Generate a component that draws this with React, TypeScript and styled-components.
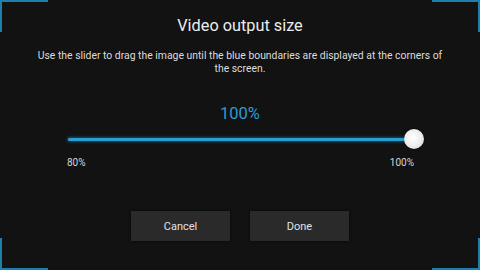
import React from "react";
import styled, { createGlobalStyle } from "styled-components";

const Global = createGlobalStyle`
  html, body { margin: 0; padding: 0; background: #121212; }
  body { font-family: Roboto, "Noto Sans", "Liberation Sans", sans-serif; }
`;

const Screen = styled.div`
  position: relative;
  width: 480px;
  height: 270px;
  overflow: hidden;
  background: #121212;
  display: flex;
  flex-direction: column;
  align-items: center;
  color: #e6e6e6;
`;

const Corner = styled.span<{ $v: "top" | "bottom"; $h: "left" | "right" }>`
  position: absolute;
  width: 48px;
  height: 32px;
  ${(p) => p.$v}: 0;
  ${(p) => p.$h}: 0;
  border-${(p) => p.$v}: 2px solid #1c80aa;
  border-${(p) => p.$h}: 2px solid #1c80aa;
  box-sizing: border-box;
`;

const Title = styled.h1`
  margin: 14px 0 0;
  font-size: 16.3px;
  line-height: 24px;
  font-weight: 400;
  color: #ececec;
`;

const Description = styled.p`
  margin: 11px 0 0;
  width: 420px;
  font-size: 10.4px;
  line-height: 13px;
  text-align: center;
  color: #dcdcdc;
`;

const Percent = styled.div`
  margin-top: 29px;
  font-size: 16.5px;
  line-height: 20px;
  color: #2b9bd2;
`;

const SliderBlock = styled.div`
  margin: 6px 0 0 2px;
  width: 346px;
  display: flex;
  flex-direction: column;
`;

const TrackArea = styled.div`
  position: relative;
  height: 18px;
  display: flex;
  align-items: center;
`;

const Track = styled.div`
  width: 100%;
  height: 3px;
  border-radius: 2px;
  background: #2a9fd3;
  box-shadow: 0 0 3px 1px rgba(30, 130, 180, 0.55);
`;

const Knob = styled.div`
  position: absolute;
  right: -10px;
  top: -1px;
  width: 20px;
  height: 20px;
  border-radius: 50%;
  background: radial-gradient(circle at 45% 45%, #ffffff 0%, #f0f0f0 45%, #cfcfcf 100%);
  box-shadow: 0 0 2px rgba(0, 0, 0, 0.6);
`;

const Labels = styled.div`
  margin-top: 8px;
  display: flex;
  justify-content: space-between;
  font-size: 10px;
  line-height: 13px;
  color: #d6d6d6;
`;

const MinLabel = styled.span`
  margin-left: -1px;
`;

const Buttons = styled.div`
  margin-top: 42px;
  display: flex;
  gap: 20px;
`;

const Button = styled.button`
  width: 99px;
  height: 30px;
  border: none;
  background: #2a2a2a;
  color: #e2e2e2;
  font-family: inherit;
  font-size: 11px;
  padding: 0;
  box-shadow: 0 0 2px rgba(0, 0, 0, 0.8);
`;

export default function App() {
  return (
    <>
      <Global />
      <Screen>
        <Corner $v="top" $h="left" />
        <Corner $v="top" $h="right" />
        <Corner $v="bottom" $h="left" />
        <Corner $v="bottom" $h="right" />
        <Title>Video output size</Title>
        <Description>
          Use the slider to drag the image until the blue boundaries are displayed at the corners of
          the screen.
        </Description>
        <Percent>100%</Percent>
        <SliderBlock>
          <TrackArea>
            <Track />
            <Knob />
          </TrackArea>
          <Labels>
            <MinLabel>80%</MinLabel>
            <span>100%</span>
          </Labels>
        </SliderBlock>
        <Buttons>
          <Button>Cancel</Button>
          <Button>Done</Button>
        </Buttons>
      </Screen>
    </>
  );
}
